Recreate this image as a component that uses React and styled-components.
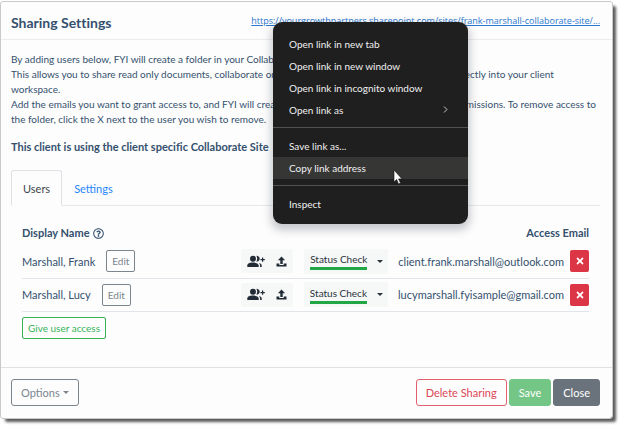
import React from 'react';
import styled, { createGlobalStyle } from 'styled-components';
import { FaRegQuestionCircle, FaTimes } from 'react-icons/fa';

const GlobalStyle = createGlobalStyle`
  * {
    box-sizing: border-box;
  }
  body {
    margin: 0;
    background: #fff;
    color: #34506e;
    font-family: Lato, 'Open Sans', sans-serif;
    font-size: 10px;
    font-variant-ligatures: none;
  }
  button {
    font-family: inherit;
    cursor: pointer;
  }
`;
const Page = styled.main`
  padding: 2px 12px 12px 1px;
`;
const Modal = styled.section`
  background: #fdfdfd;
  border-radius: 2px;
  outline: 1px solid #c9c9c9;
  box-shadow: 4px 4px 3px 0 rgba(0, 0, 0, 0.65);
`;
const Header = styled.header`
  display: flex;
  justify-content: space-between;
  align-items: center;
  height: 38px;
  padding: 0 12px 0 10px;
  border-bottom: 1px solid #ececee;
`;
const Title = styled.h1`
  margin: 4px 0 0;
  font-size: 14px;
  line-height: 20px;
  font-weight: 700;
`;
const LinkWrap = styled.div`
  position: relative;
`;
const SiteLink = styled.a`
  color: #2a78cf;
  font-family: 'Open Sans', sans-serif;
  font-size: 9px;
  line-height: 14px;
`;
const Menu = styled.ul`
  position: absolute;
  top: 8px;
  right: 132px;
  width: 195px;
  margin: 0;
  padding: 11px 0 9px;
  list-style: none;
  background: #1f1f1f;
  border-radius: 9px;
  box-shadow: 0 4px 9px 2px rgba(40, 45, 60, 0.25);
`;
const MenuItem = styled.button`
  display: flex;
  justify-content: space-between;
  align-items: center;
  width: 100%;
  height: 22px;
  padding: 0 20px 0 16px;
  border: 0;
  background: ${(props) => (props.$hovered ? '#363635' : 'transparent')};
  color: #f0f0f0;
  font-size: 10px;
  line-height: 14px;
`;
const Divider = styled.li`
  height: 1px;
  margin: 6px 0 7px;
  background: #515151;
`;
const Pointer = styled.svg`
  position: absolute;
  top: 147px;
  left: 120px;
`;
const Body = styled.div`
  padding: 12px 12px 28px 10px;
`;
const Text = styled.p`
  margin: 0;
  line-height: 15px;
`;
const Notice = styled.p`
  margin: 12px 0 16px;
  font-size: 11px;
  font-weight: 700;
  line-height: 15px;
`;
const Tabs = styled.div`
  display: flex;
  border-bottom: 1px solid #e6e8ea;
`;
const Tab = styled.button`
  height: 36px;
  margin-bottom: -1px;
  padding: 0 11px;
  border: 1px solid ${(props) => (props.$active ? '#dee2e6' : 'transparent')};
  border-bottom-color: ${(props) => (props.$active ? '#fdfdfd' : 'transparent')};
  border-radius: 3px 3px 0 0;
  background: transparent;
  color: ${(props) => (props.$active ? '#40464c' : '#1f86ff')};
  font-size: 11px;
`;
const Panel = styled.div`
  padding: 13px 11px 0;
`;
const UserTable = styled.table`
  width: 100%;
  border-collapse: collapse;
  font-size: 11px;
`;
const HeadCell = styled.th`
  height: 26px;
  padding: 0;
  font-weight: 700;
  text-align: ${(props) => (props.$right ? 'right' : 'left')};
  svg {
    margin-left: 3px;
    vertical-align: -2px;
  }
`;
const Cell = styled.td`
  height: 33px;
  padding: 0;
  border-bottom: 1px solid #e1e4e8;
`;
const CellRow = styled.div`
  display: flex;
  align-items: center;
  justify-content: ${(props) => (props.$right ? 'flex-end' : 'flex-start')};
`;
const OutlineButton = styled.button`
  height: 22px;
  padding: 0 5px;
  border: 1px solid ${(props) => props.$color};
  border-radius: 2px;
  background: transparent;
  color: ${(props) => props.$color};
  font-size: 10px;
`;
const EditButton = styled(OutlineButton)`
  margin-left: 11px;
`;
const Tools = styled.div`
  display: flex;
  align-items: center;
  gap: 10px;
  height: 24px;
  padding: 0 6px;
  margin-right: 11px;
  border-radius: 2px;
  background: #f6f7f7;
`;
const IconButton = styled.button`
  display: flex;
  padding: 0;
  border: 0;
  background: none;
  color: #212b35;
`;
const StatusButton = styled.button`
  display: flex;
  align-items: center;
  gap: 10px;
  height: 25px;
  padding: 0 5px 0 6px;
  margin-right: 10px;
  border: 0;
  border-radius: 2px;
  background: #f6f7f7;
  color: #2b333b;
  font-size: 10px;
`;
const StatusLabel = styled.span`
  border-bottom: 3px solid #21a745;
  line-height: 15px;
`;
const Caret = styled.span`
  display: inline-block;
  border: 3px solid transparent;
  border-top-color: currentColor;
  border-bottom: 0;
`;
const RemoveButton = styled.button`
  display: flex;
  align-items: center;
  justify-content: center;
  width: 19px;
  height: 22px;
  margin-left: 6px;
  padding: 0;
  border: 0;
  border-radius: 2px;
  background: #dc3545;
  color: #fff;
`;
const AccessButton = styled(OutlineButton)`
  margin-top: 5px;
`;
const Footer = styled.footer`
  display: flex;
  align-items: center;
  gap: 2px;
  padding: 11px 12px 12px 10px;
  border-top: 1px solid #dfe2e5;
`;
const FooterButton = styled.button`
  height: 27px;
  padding: 0 9px;
  border: 1px solid ${(props) => props.$border};
  border-radius: 3px;
  background: ${(props) => props.$fill || 'transparent'};
  color: ${(props) => props.$color};
  font-size: 11px;
`;
const OptionsButton = styled(FooterButton)`
  display: flex;
  align-items: center;
  gap: 3px;
  margin-right: auto;
`;

const PeopleIcon = () => (
  <svg width='19' height='13' viewBox='0 0 19 13' fill='currentColor'>
    <circle cx='6' cy='3.7' r='3' />
    <path d='M.3 12v-1.400C.3 8.400 3.200 7.600 6 7.600s5.700.8 5.700 3V12z' />
    <path d='M9.300.8c2.300 0 3.400 1.400 3.400 2.900s-1.100 2.900-3.400 2.900c1.200-1.600 1.200-4.200 0-5.800z' />
    <path d='M12 7.900c1.900.5 2.700 1.400 2.700 2.700V12h-1.600v-1.400c0-1.100-.4-2-1.100-2.700z' />
    <path d='M15 2.600h1.200v1.500h1.600v1.200h-1.600v1.500H15V5.300h-1.500V4.100H15z' />
  </svg>
);
const UploadIcon = () => (
  <svg width='11' height='11' viewBox='0 0 11 11' fill='currentColor'>
    <path d='M5.500.4l3.600 3.800H6.700V8H4.300V4.200H1.900z' />
    <path d='M.5 7.400h2.800v1.500h4.400V7.400h2.800v3.200H.5z' />
  </svg>
);

const users = [
  { name: 'Marshall, Frank', email: 'client.frank.marshall@outlook.com' },
  { name: 'Marshall, Lucy', email: 'lucymarshall.fyisample@gmail.com' },
];

const UserRow = ({ user }) => (
  <tr>
    <Cell>
      <CellRow>
        {user.name}
        <EditButton $color='#7b858e'>Edit</EditButton>
      </CellRow>
    </Cell>
    <Cell>
      <CellRow $right>
        <Tools>
          <IconButton aria-label='Add to group'>
            <PeopleIcon />
          </IconButton>
          <IconButton aria-label='Upload'>
            <UploadIcon />
          </IconButton>
        </Tools>
        <StatusButton>
          <StatusLabel>Status Check</StatusLabel>
          <Caret />
        </StatusButton>
        {user.email}
        <RemoveButton aria-label='Remove user'>
          <FaTimes size={10} />
        </RemoveButton>
      </CellRow>
    </Cell>
  </tr>
);

const ContextMenu = () => (
  <Menu>
    <li><MenuItem>Open link in new tab</MenuItem></li>
    <li><MenuItem>Open link in new window</MenuItem></li>
    <li><MenuItem>Open link in incognito window</MenuItem></li>
    <li>
      <MenuItem>
        Open link as
        <svg width='5' height='7' viewBox='0 0 5 7' fill='none' stroke='#c8c8c8'>
          <path d='M1 0.500L4 3.500L1 6.500' />
        </svg>
      </MenuItem>
    </li>
    <Divider />
    <li><MenuItem>Save link as...</MenuItem></li>
    <li><MenuItem $hovered>Copy link address</MenuItem></li>
    <Divider />
    <li><MenuItem>Inspect</MenuItem></li>
    <Pointer width='10' height='16' viewBox='0 0 10 16'>
      <path d='M1 1v12l2.700-2.500L5.500 15l2-.9-1.900-4.200H9z' fill='#fff' stroke='#111' strokeWidth='0.600' />
    </Pointer>
  </Menu>
);

const App = () => (
  <Page>
    <GlobalStyle />
    <Modal>
      <Header>
        <Title>Sharing Settings</Title>
        <LinkWrap>
          <SiteLink href='#site'>
            https://yourgrowthpartners.sharepoint.com/sites/frank-marshall-collaborate-site/...
          </SiteLink>
          <ContextMenu />
        </LinkWrap>
      </Header>
      <Body>
        <Text>
          By adding users below, FYI will create a folder in your Collaborate Site that can be accessed by the client.
        </Text>
        <Text>
          This allows you to share read only documents, collaborate on files together live, and upload your files
          directly into your client workspace.
        </Text>
        <Text>
          Add the emails you want to grant access to, and FYI will create the folder and set the site SharePoint
          permissions. To remove access to the folder, click the X next to the user you wish to remove.
        </Text>
        <Notice>This client is using the client specific Collaborate Site</Notice>
        <Tabs role='tablist'>
          <Tab role='tab' aria-selected='true' $active>Users</Tab>
          <Tab role='tab' aria-selected='false'>Settings</Tab>
        </Tabs>
        <Panel>
          <UserTable>
            <thead>
              <tr>
                <HeadCell>
                  Display Name
                  <FaRegQuestionCircle size={11} />
                </HeadCell>
                <HeadCell $right>Access Email</HeadCell>
              </tr>
            </thead>
            <tbody>
              {users.map((user) => (
                <UserRow key={user.email} user={user} />
              ))}
            </tbody>
          </UserTable>
          <AccessButton $color='#35b457'>Give user access</AccessButton>
        </Panel>
      </Body>
      <Footer>
        <OptionsButton $border='#7b858e' $color='#7b858e'>
          Options
          <Caret />
        </OptionsButton>
        <FooterButton $border='#e2606d' $color='#dc4655'>Delete Sharing</FooterButton>
        <FooterButton $border='#73c686' $fill='#73c686' $color='#fff'>Save</FooterButton>
        <FooterButton $border='#6a737c' $fill='#6a737c' $color='#fff'>Close</FooterButton>
      </Footer>
    </Modal>
  </Page>
);

export default App;
